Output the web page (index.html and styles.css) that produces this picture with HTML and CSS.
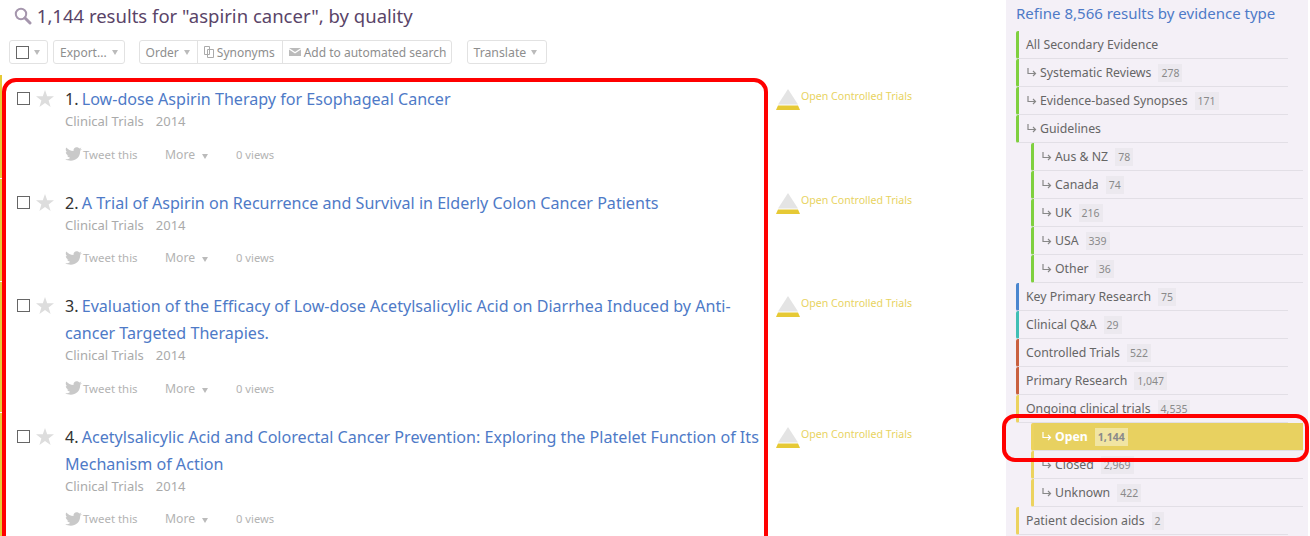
FILE: index.html
```html
<!DOCTYPE html>
<html lang="en">
<head>
<meta charset="UTF-8" />
<title>Search results</title>
<link rel="stylesheet" href="styles.css">
</head>
<body>
<svg class="sprites" width="0" height="0">
  <symbol id="star" viewBox="0 0 18 17"><path d="M9 0l2.200 6.300H18l-5.400 4.100 2 6.600L9 13l-5.600 4 2-6.600L0 6.300h6.800z"/></symbol>
  <symbol id="bird" viewBox="0 0 17 14"><path d="M17 2l-2 .6L16.400.6l-2 .8C13 0 10.500-.3 9.300 1.200 8.500 2.200 8.400 3 8.600 4 5.500 4 3 2.500 1.200.6.300 2.300.8 4.200 2.200 5.300L.8 5c0 1.700 1.200 3 2.800 3.400l-1.400.1c.5 1.300 1.600 2.100 3 2.200C4 11.900 2.200 12.400.2 12.200 6 15.500 15.400 13.400 15.200 3.800z"/></symbol>
  <symbol id="quality" viewBox="0 0 24 21"><path d="M12 0l10 15.500H2z" fill="#e4e4e4"/><path d="M2 16.500h20l2 4.500H0z" fill="#e6c935"/></symbol>
  <symbol id="branch" viewBox="0 0 10 9"><path d="M1 0v5.500h7M6 3l2.500 2.500L6 8" fill="none" stroke="currentColor" stroke-width="1.200"/></symbol>
</svg>
<div class="page">

  <div class="main">
    <h1 class="heading">
      <svg class="search-icon" width="18" height="18" viewBox="0 0 18 18"><circle cx="7" cy="7" r="5.2" fill="none" stroke="#a596ad" stroke-width="2"/><path d="M11 11l5 5" stroke="#a596ad" stroke-width="3" stroke-linecap="round"/></svg>
      1,144 results for "aspirin cancer", by quality
    </h1>

    <div class="toolbar">
      <div class="btn-group"><span class="btn btn-check"><span class="box"></span><span class="caret"></span></span></div>
      <div class="btn-group btn-group-export"><span class="btn">Export... <span class="caret"></span></span></div>
      <div class="btn-group">
        <span class="btn btn-order">Order <span class="caret"></span></span>
        <span class="btn btn-synonyms"><svg width="10" height="12" viewBox="0 0 10 12"><path d="M.5.5h5v8h-5zM3.500 3.500h6v8h-6z" fill="#fff" stroke="#aaa"/></svg>Synonyms</span>
        <span class="btn btn-alert"><svg width="12" height="8" viewBox="0 0 12 8"><path d="M0 0h12L6 4zM0 1.500l6 4 6-4V8H0z" fill="#bbb"/></svg>Add to automated search</span>
      </div>
      <div class="btn-group"><span class="btn btn-translate">Translate <span class="caret"></span></span></div>
    </div>

    <div class="results">
      <div class="result">
        <div class="controls"><span class="box"></span><svg class="star" width="18" height="17"><use href="#star"/></svg></div>
        <div class="body">
          <div class="title"><span class="num">1.</span> <a href="#">Low-dose Aspirin Therapy for Esophageal Cancer</a></div>
          <div class="meta"><span>Clinical Trials</span><span>2014</span></div>
          <div class="actions">
            <span class="tweet"><svg width="17" height="14"><use href="#bird"/></svg><span>Tweet this</span></span>
            <span class="more">More <span class="caret"></span></span>
            <span class="views">0 views</span>
          </div>
        </div>
        <div class="tag"><svg width="24" height="21"><use href="#quality"/></svg><span>Open Controlled Trials</span></div>
      </div>

      <div class="result">
        <div class="controls"><span class="box"></span><svg class="star" width="18" height="17"><use href="#star"/></svg></div>
        <div class="body">
          <div class="title"><span class="num">2.</span> <a href="#">A Trial of Aspirin on Recurrence and Survival in Elderly Colon Cancer Patients</a></div>
          <div class="meta"><span>Clinical Trials</span><span>2014</span></div>
          <div class="actions">
            <span class="tweet"><svg width="17" height="14"><use href="#bird"/></svg><span>Tweet this</span></span>
            <span class="more">More <span class="caret"></span></span>
            <span class="views">0 views</span>
          </div>
        </div>
        <div class="tag"><svg width="24" height="21"><use href="#quality"/></svg><span>Open Controlled Trials</span></div>
      </div>

      <div class="result">
        <div class="controls"><span class="box"></span><svg class="star" width="18" height="17"><use href="#star"/></svg></div>
        <div class="body">
          <div class="title"><span class="num">3.</span> <a href="#">Evaluation of the Efficacy of Low-dose Acetylsalicylic Acid on Diarrhea Induced by Anti-cancer Targeted Therapies.</a></div>
          <div class="meta"><span>Clinical Trials</span><span>2014</span></div>
          <div class="actions">
            <span class="tweet"><svg width="17" height="14"><use href="#bird"/></svg><span>Tweet this</span></span>
            <span class="more">More <span class="caret"></span></span>
            <span class="views">0 views</span>
          </div>
        </div>
        <div class="tag"><svg width="24" height="21"><use href="#quality"/></svg><span>Open Controlled Trials</span></div>
      </div>

      <div class="result">
        <div class="controls"><span class="box"></span><svg class="star" width="18" height="17"><use href="#star"/></svg></div>
        <div class="body">
          <div class="title"><span class="num">4.</span> <a href="#">Acetylsalicylic Acid and Colorectal Cancer Prevention: Exploring the Platelet Function of Its Mechanism of Action</a></div>
          <div class="meta"><span>Clinical Trials</span><span>2014</span></div>
          <div class="actions">
            <span class="tweet"><svg width="17" height="14"><use href="#bird"/></svg><span>Tweet this</span></span>
            <span class="more">More <span class="caret"></span></span>
            <span class="views">0 views</span>
          </div>
        </div>
        <div class="tag"><svg width="24" height="21"><use href="#quality"/></svg><span>Open Controlled Trials</span></div>
      </div>
    </div>
  </div>

  <div class="sidebar">
    <h2 class="refine">Refine 8,566 results by evidence type</h2>
    <ul class="types">
      <li class="green">All Secondary Evidence</li>
      <li class="green"><svg class="branch"><use href="#branch"/></svg>Systematic Reviews <b>278</b></li>
      <li class="green"><svg class="branch"><use href="#branch"/></svg>Evidence-based Synopses <b>171</b></li>
      <li class="green"><svg class="branch"><use href="#branch"/></svg>Guidelines</li>
      <li class="green sub"><svg class="branch"><use href="#branch"/></svg>Aus &amp; NZ <b>78</b></li>
      <li class="green sub"><svg class="branch"><use href="#branch"/></svg>Canada <b>74</b></li>
      <li class="green sub"><svg class="branch"><use href="#branch"/></svg>UK <b>216</b></li>
      <li class="green sub"><svg class="branch"><use href="#branch"/></svg>USA <b>339</b></li>
      <li class="green sub"><svg class="branch"><use href="#branch"/></svg>Other <b>36</b></li>
      <li class="blue">Key Primary Research <b>75</b></li>
      <li class="teal">Clinical Q&amp;A <b>29</b></li>
      <li class="red">Controlled Trials <b>522</b></li>
      <li class="red">Primary Research <b>1,047</b></li>
      <li class="yellow">Ongoing clinical trials <b>4,535</b></li>
      <li class="yellow sub active"><svg class="branch"><use href="#branch"/></svg>Open <b>1,144</b></li>
      <li class="yellow sub"><svg class="branch"><use href="#branch"/></svg>Closed <b>2,969</b></li>
      <li class="yellow sub"><svg class="branch"><use href="#branch"/></svg>Unknown <b>422</b></li>
      <li class="yellow">Patient decision aids <b>2</b></li>
    </ul>
  </div>

  <!-- red annotation boxes drawn over the screenshot -->
  <div class="mark mark-results"></div>
  <div class="mark mark-open"></div>
</div>
</body>
</html>
```

FILE: styles.css
```css
html, body {
  margin: 0;
  padding: 0;
  height: 536px;
  overflow: hidden;
  background: #fff;
  font-family: "Noto Sans", Arial, sans-serif;
}

.sprites {
  position: absolute;
}

.page {
  position: relative;
  display: flex;
  height: 536px;
  overflow: hidden;
}

.main {
  width: 1006px;
  flex: none;
}

.heading {
  margin: 0;
  padding: 3px 0 0 14px;
  height: 40px;
  box-sizing: border-box;
  font-size: 18.5px;
  line-height: 25px;
  font-weight: normal;
  color: #5a4468;
}
.search-icon {
  vertical-align: -2px;
}

.toolbar {
  display: flex;
  padding-left: 9px;
  height: 35px;
  box-sizing: border-box;
}
.btn-group {
  display: flex;
  height: 24px;
  box-sizing: border-box;
  border: 1px solid #e2e2e2;
  border-radius: 3px;
  margin-right: 15px;
}
.btn-group:first-child {
  margin-right: 5px;
}
.btn-group-export {
  margin-right: 14px;
}
.btn {
  display: flex;
  align-items: center;
  gap: 3px;
  padding: 0 6px;
  font-size: 12px;
  color: #8e8e8e;
  white-space: nowrap;
}
.btn + .btn {
  border-left: 1px solid #e2e2e2;
}
.btn-check {
  padding-right: 7px;
}
.btn-order {
  padding-right: 7px;
}
.btn-synonyms {
  padding-right: 7px;
}
.btn-alert {
  padding-right: 5px;
}
.btn-translate {
  padding: 0 9px 0 5px;
  font-size: 12.3px;
}
.caret {
  display: inline-block;
  width: 0;
  height: 0;
  margin-left: 2px;
  border-left: 3px solid transparent;
  border-right: 3px solid transparent;
  border-top: 5px solid #bbb;
}

.result {
  display: flex;
  padding: 11px 0 14.5px;
  margin-bottom: 1px;
  border-left: 2px solid #e6c935;
}
.controls {
  width: 63px;
  flex: none;
  display: flex;
  align-items: flex-start;
  padding: 6px 0 0 15px;
  box-sizing: border-box;
  gap: 6px;
}
.box {
  display: block;
  width: 11px;
  height: 11px;
  border: 1px solid #666;
  flex: none;
}
.star {
  flex: none;
  fill: #ddd;
  margin-top: -2px;
}
.body {
  width: 701px;
  flex: none;
}
.title {
  font-size: 16.1px;
  line-height: 27px;
  color: #333;
}
.title a {
  color: #4e7ac7;
  text-decoration: none;
}
.num {
  margin-right: -1px;
}
.meta {
  display: flex;
  gap: 12px;
  font-size: 13px;
  line-height: 17px;
  color: #aaa;
}
.actions {
  display: flex;
  align-items: center;
  margin-top: 15px;
  height: 18px;
  font-size: 11.2px;
  color: #b3b3b3;
}
.tweet {
  display: flex;
  align-items: center;
  width: 100px;
  flex: none;
  fill: #c9c9c9;
  font-size: 11.4px;
}
.tweet span {
  margin-left: 1px;
}
.more {
  width: 71px;
  flex: none;
  font-size: 12.2px;
}
.more .caret {
  margin-left: 4px;
}
.tag {
  display: flex;
  align-items: flex-start;
  margin: 3px 0 0 10px;
  font-size: 10.6px;
  line-height: 14px;
  color: #e8d35f;
  white-space: nowrap;
}
.tag span {
  margin-left: 1px;
}

.sidebar {
  flex: none;
  width: 302px;
  background: #f4f0f7;
  padding: 4px 0 0 10px;
  box-sizing: border-box;
}
.refine {
  margin: 0;
  height: 27px;
  font-size: 15px;
  line-height: 18px;
  font-weight: normal;
  color: #4e7ac7;
}
.types {
  list-style: none;
  margin: 0;
  padding: 0;
}
.types li {
  box-sizing: border-box;
  height: 28px;
  width: 272px;
  display: flex;
  align-items: center;
  padding-left: 7px;
  border-left: 3px solid #ccc;
  border-bottom: 1px solid #e2dfe6;
  border-radius: 2px 0 0 2px;
  font-size: 12.3px;
  color: #666;
  white-space: nowrap;
}
.types li.sub {
  margin-left: 15px;
}
.branch {
  flex: none;
  width: 10px;
  height: 9px;
  margin: 0 3px 0 1px;
  color: #888;
}
.types b {
  font-weight: normal;
  font-size: 10.5px;
  color: #8a8a8a;
  background: #ece9ef;
  padding: 2px 3px;
  margin-left: 7px;
}
.types .green { border-left-color: #7fd03f; }
.types .blue { border-left-color: #4a86cf; }
.types .teal { border-left-color: #3fbfb5; }
.types .red { border-left-color: #c9603f; }
.types .yellow { border-left-color: #ecd35f; }
.types li.active {
  background: #e8d160;
  color: #fff;
  font-weight: bold;
}
.types li.active .branch {
  color: #fff;
}
.types li.active b {
  background: #f1e5a3;
  font-weight: bold;
}

.mark {
  position: absolute;
  box-sizing: border-box;
  border: 4px solid #f00;
}
.mark-results {
  left: 2px;
  top: 78px;
  width: 766px;
  height: 480px;
  border-radius: 14px;
}
.mark-open {
  left: 1002px;
  top: 414px;
  width: 307px;
  height: 48px;
  border-radius: 13px;
}
```
